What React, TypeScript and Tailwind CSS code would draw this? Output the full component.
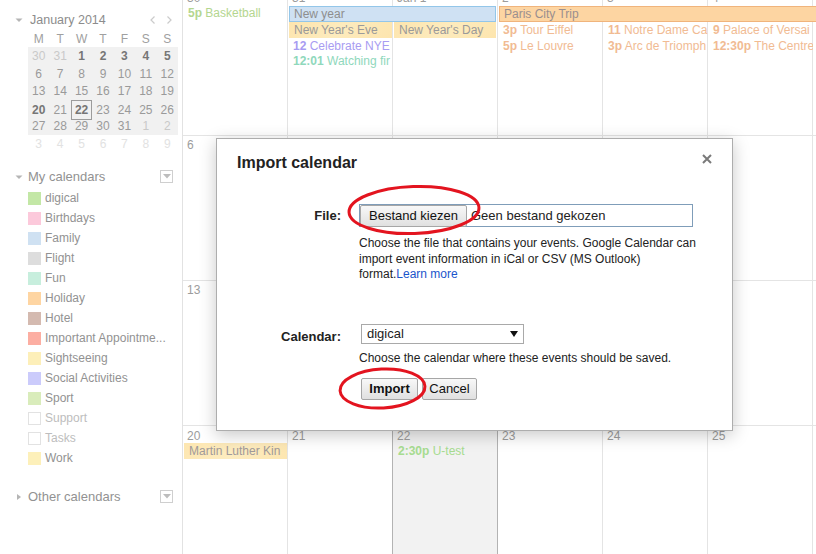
import React from "react";

type Cell = { t: string; k?: string };

const plain = (a: string[]): Cell[] => a.map((t) => ({ t }));

const mini: Cell[][] = [
  [{ t: "30", k: "off" }, { t: "31", k: "off" }, { t: "1", k: "b" }, { t: "2", k: "b" }, { t: "3", k: "b" }, { t: "4", k: "b" }, { t: "5", k: "b" }],
  plain(["6", "7", "8", "9", "10", "11", "12"]),
  plain(["13", "14", "15", "16", "17", "18", "19"]),
  [{ t: "20", k: "b" }, { t: "21" }, { t: "22", k: "today" }, { t: "23" }, { t: "24" }, { t: "25" }, { t: "26" }],
  [{ t: "27" }, { t: "28" }, { t: "29" }, { t: "30" }, { t: "31" }, { t: "1", k: "off" }, { t: "2", k: "off" }],
];
const lastRow = ["3", "4", "5", "6", "7", "8", "9"];

function cellCls(k?: string) {
  if (k === "off") return "text-[#c9c9c9]";
  if (k === "b") return "text-[#767676] font-bold";
  if (k === "today") return "text-[#767676] font-bold border border-[#9c9c9c]";
  return "text-[#9a9a9a]";
}

const cals: [string, string][] = [
  ["digical", "bg-[#c3e7a6]"],
  ["Birthdays", "bg-[#fcc9db]"],
  ["Family", "bg-[#cfe1f2]"],
  ["Flight", "bg-[#dddddd]"],
  ["Fun", "bg-[#c7eedd]"],
  ["Holiday", "bg-[#fed5a2]"],
  ["Hotel", "bg-[#d4bab0]"],
  ["Important Appointme...", "bg-[#fcaea2]"],
  ["Sightseeing", "bg-[#fdefb9]"],
  ["Social Activities", "bg-[#cbcbfb]"],
  ["Sport", "bg-[#d9ecbb]"],
  ["Support", "bg-white border border-[#e2e2e2]"],
  ["Tasks", "bg-white border border-[#e2e2e2]"],
  ["Work", "bg-[#fdf0ba]"],
];

function Caret({ right }: { right?: boolean }) {
  return right ? (
    <svg width="8" height="8" viewBox="0 0 8 8" className="shrink-0">
      <path d="M2 1 L6 4 L2 7 Z" fill="#b5b5b5" />
    </svg>
  ) : (
    <svg width="8" height="8" viewBox="0 0 8 8" className="shrink-0">
      <path d="M0.5 2.5 L7.5 2.5 L4 6 Z" fill="#b5b5b5" />
    </svg>
  );
}

function DropBox() {
  return (
    <div className="w-[13px] h-[13px] border border-[#cfcfcf] flex items-center justify-center">
      <svg width="8" height="5" viewBox="0 0 8 5">
        <path d="M0 0 L8 0 L4 4.5 Z" fill="#bdbdbd" />
      </svg>
    </div>
  );
}

function Sidebar() {
  return (
    <aside className="w-[182px] shrink-0 text-[#929292]">
      <div className="pt-[11px] h-[28px] flex items-center pl-[15px]">
        <Caret />
        <span className="ml-[7px] text-[12.5px] leading-[16px] text-[#8c8c8c]">January 2014</span>
        <div className="ml-auto mr-[10px] flex items-center gap-[12px]">
          <svg width="5" height="8" viewBox="0 0 5 8">
            <path d="M4.5 0.5 L1 4 L4.5 7.5" fill="none" stroke="#cbcbcb" strokeWidth="1.2" />
          </svg>
          <svg width="5" height="8" viewBox="0 0 5 8">
            <path d="M0.5 0.5 L4 4 L0.5 7.5" fill="none" stroke="#cbcbcb" strokeWidth="1.2" />
          </svg>
        </div>
      </div>
      <div className="ml-[28px] w-[150px] mt-[4px]">
        <div className="grid grid-cols-7 h-[15px] text-[12px] leading-[15px] text-center text-[#a0a0a0]">
          {["M", "T", "W", "T", "F", "S", "S"].map((d, i) => (
            <div key={i}>{d}</div>
          ))}
        </div>
        <div className="bg-[#f1f1f1]">
          {mini.map((row, ri) => (
            <div key={ri} className="grid grid-cols-7 h-[17.5px]">
              {row.map((c, ci) => (
                <div key={ci} className={"flex items-center justify-center text-[12px] " + cellCls(c.k)}>
                  {c.t}
                </div>
              ))}
            </div>
          ))}
        </div>
        <div className="grid grid-cols-7 h-[17.5px]">
          {lastRow.map((t, i) => (
            <div key={i} className="flex items-center justify-center text-[12px] text-[#e2e2e2]">
              {t}
            </div>
          ))}
        </div>
      </div>

      <div className="mt-[16px] h-[18px] flex items-center pl-[15px] pr-[9px]">
        <Caret />
        <span className="ml-[5px] text-[13px] leading-[18px]">My calendars</span>
        <div className="ml-auto -mt-[2px]">
          <DropBox />
        </div>
      </div>
      <div className="mt-[2px]">
        {cals.map(([name, sw]) => (
          <div key={name} className="h-[20px] flex items-center pl-[28px]">
            <div className={"w-[13px] h-[13px] shrink-0 " + sw} />
            <span
              className={
                "ml-[4px] text-[12px] leading-[14px] whitespace-nowrap " +
                (name === "Support" || name === "Tasks" ? "text-[#bdbdbd]" : "text-[#929292]")
              }
            >
              {name}
            </span>
          </div>
        ))}
      </div>
      <div className="mt-[20px] h-[18px] flex items-center pl-[15px] pr-[9px]">
        <Caret right />
        <span className="ml-[5px] text-[13px] leading-[18px]">Other calendars</span>
        <div className="ml-auto -mt-[2px]">
          <DropBox />
        </div>
      </div>
    </aside>
  );
}

function BgCells({ today }: { today?: boolean }) {
  return (
    <div className="absolute inset-0 grid grid-cols-[repeat(7,105px)]">
      {[0, 1, 2, 3, 4, 5, 6].map((i) => {
        let cls = "border-r border-[#e4e4e4]";
        if (today && i === 1) cls = "border-r border-[#b3b3b3]";
        if (today && i === 2) cls = "border-r border-[#b3b3b3] bg-[#f2f2f2]";
        return <div key={i} className={cls} />;
      })}
    </div>
  );
}

const num = "text-[12px] leading-[16px] pl-[4px] pt-[1px] text-[#9c9c9c] whitespace-nowrap";
const ev = "min-w-0 text-[12px] leading-[16px] px-[5px] whitespace-nowrap overflow-hidden";

function Week1() {
  return (
    <div className="relative h-[147px] -mt-[11px] border-b border-[#e4e4e4] shrink-0">
      <BgCells />
      <div className="relative grid grid-cols-[repeat(7,105px)] grid-rows-[17px_16px_16px_16px_16px]">
        {["30", "31", "Jan 1", "2", "3", "4", "5"].map((t, i) => (
          <div key={i} className={num + " row-start-1"}>
            {t}
          </div>
        ))}
        <div className={ev + " col-start-1 row-start-2 text-[#b4d68f] -mt-[1px]"}>
          <b>5p</b> Basketball
        </div>
        <div className="col-start-2 col-span-2 row-start-2 ml-[1px] mr-[2px] h-[16px] border border-[#93c6e9] bg-[#cfe1f3] text-[12px] leading-[14px] pl-[4px] text-[#8e8e8e] whitespace-nowrap overflow-hidden">
          New year
        </div>
        <div className="col-start-4 col-span-4 row-start-2 ml-[1px] h-[16px] border border-[#f0b47c] bg-[#fdd5a2] text-[12px] leading-[14px] pl-[4px] text-[#9a8f8f] whitespace-nowrap overflow-hidden">
          Paris City Trip
        </div>
        <div className="col-start-2 row-start-3 mx-[1px] h-[16px] bg-[linear-gradient(135deg,#fde5ae_0%,#fdebbd_50%,#fde5ae_100%)] text-[12px] leading-[16px] pl-[5px] text-[#9a9a9a] whitespace-nowrap overflow-hidden">
          New Year's Eve
        </div>
        <div className="col-start-3 row-start-3 ml-[1px] mr-[2px] h-[16px] bg-[linear-gradient(135deg,#fde5ae_0%,#fdebbd_50%,#fde5ae_100%)] text-[12px] leading-[16px] pl-[5px] text-[#9a9a9a] whitespace-nowrap overflow-hidden">
          New Year's Day
        </div>
        <div className={ev + " col-start-4 row-start-3 text-[#f1bb93]"}>
          <b>3p</b> Tour Eiffel
        </div>
        <div className={ev + " col-start-5 row-start-3 text-[#f1bb93]"}>
          <b>11</b> Notre Dame Ca
        </div>
        <div className={ev + " col-start-6 row-start-3 text-[#f1bb93]"}>
          <b>9</b> Palace of Versai
        </div>
        <div className={ev + " col-start-2 row-start-4 text-[#a89cf2]"}>
          <b>12</b> Celebrate NYE
        </div>
        <div className={ev + " col-start-4 row-start-4 text-[#f1bb93]"}>
          <b>5p</b> Le Louvre
        </div>
        <div className={ev + " col-start-5 row-start-4 text-[#f1bb93]"}>
          <b>3p</b> Arc de Triomph
        </div>
        <div className={ev + " col-start-6 row-start-4 text-[#f1bb93]"}>
          <b>12:30p</b> The Centre
        </div>
        <div className={ev + " col-start-2 row-start-5 text-[#8fd8bc] -mt-[1px]"}>
          <b>12:01</b> Watching fir
        </div>
      </div>
    </div>
  );
}

function PlainWeek({ nums }: { nums: string[] }) {
  return (
    <div className="relative h-[145px] border-b border-[#e4e4e4] shrink-0">
      <BgCells />
      <div className="relative grid grid-cols-[repeat(7,105px)]">
        {nums.map((t, i) => (
          <div key={i} className={num}>
            {t}
          </div>
        ))}
      </div>
    </div>
  );
}

function Week4() {
  return (
    <div className="relative h-[145px] shrink-0">
      <BgCells today />
      <div className="relative grid grid-cols-[repeat(7,105px)] grid-rows-[17px_16px]">
        {["20", "21", "22", "23", "24", "25", "26"].map((t, i) => (
          <div key={i} className={num + " row-start-1 pt-[2px]"}>
            {t}
          </div>
        ))}
        <div className="col-start-1 row-start-2 mx-[1px] h-[16px] bg-[linear-gradient(135deg,#fde6b0_0%,#fdecc0_50%,#fde6b0_100%)] text-[12px] leading-[16px] pl-[5px] text-[#a19a9a] whitespace-nowrap overflow-hidden">
          Martin Luther Kin
        </div>
        <div className={ev + " col-start-3 row-start-2 text-[#a7dc90]"}>
          <b>2:30p</b> U-test
        </div>
      </div>
    </div>
  );
}

function Btn({ children, className }: { children: React.ReactNode; className?: string }) {
  return (
    <div
      className={
        "h-[22px] flex items-center justify-center border border-[#a6a6a6] rounded-[2px] bg-[linear-gradient(#f8f8f8,#e0e0e0)] text-[13px] text-[#111] " +
        (className || "")
      }
    >
      {children}
    </div>
  );
}

function Dialog() {
  return (
    <div className="absolute left-[216px] top-[138px] w-[517px] h-[293px] bg-white border border-[#adadad] shadow-[0_4px_16px_rgba(0,0,0,0.22)] text-[#222]">
      <div className="pl-[20px] pt-[15px] text-[16px] font-bold leading-[18px]">Import calendar</div>
      <div className="absolute top-[15px] right-[20px]">
        <svg width="10" height="10" viewBox="0 0 10 10">
          <path d="M1 1 L9 9 M9 1 L1 9" stroke="#7a7a7a" strokeWidth="2" />
        </svg>
      </div>

      <div className="mt-[32px] flex">
        <div className="w-[124px] text-right text-[13px] font-bold leading-[23px]">File:</div>
        <div className="ml-[18px]">
          <div className="w-[334px] h-[23px] border border-[#7f9db9] flex items-center">
            <Btn className="w-[107px] h-[22px]">Bestand kiezen</Btn>
            <span className="ml-[4px] text-[13px]">Geen bestand gekozen</span>
          </div>
          <div className="mt-[9px] text-[12px] leading-[15.5px] whitespace-nowrap">
            Choose the file that contains your events. Google Calendar can
            <br />
            import event information in iCal or CSV (MS Outlook)
            <br />
            format.<span className="text-[#1a55cc]">Learn more</span>
          </div>
        </div>
      </div>

      <div className="mt-[41px] flex">
        <div className="w-[124px] text-right text-[13px] font-bold leading-[20px] pt-[3px]">Calendar:</div>
        <div className="ml-[18px]">
          <div className="ml-[2px] w-[163px] h-[20px] border border-[#a9a9a9] flex items-center pl-[5px] pr-[5px] text-[13px]">
            <span>digical</span>
            <svg width="8" height="6" viewBox="0 0 8 6" className="ml-auto">
              <path d="M0 0 L8 0 L4 6 Z" fill="#111" />
            </svg>
          </div>
          <div className="mt-[6px] text-[12px] leading-[16px] whitespace-nowrap">
            Choose the calendar where these events should be saved.
          </div>
          <div className="mt-[12px] ml-[2px] flex gap-[4px]">
            <Btn className="w-[57px] font-bold">Import</Btn>
            <Btn className="w-[55px]">Cancel</Btn>
          </div>
        </div>
      </div>
    </div>
  );
}

export default function App() {
  return (
    <div className="relative w-[816px] h-[554px] overflow-hidden bg-white font-['Liberation_Sans',Arial,sans-serif]">
      <div className="flex h-full">
        <Sidebar />
        <main className="flex-1 flex flex-col overflow-hidden border-l border-[#e2e2e2]">
          <Week1 />
          <PlainWeek nums={["6", "7", "8", "9", "10", "11", "12"]} />
          <PlainWeek nums={["13", "14", "15", "16", "17", "18", "19"]} />
          <Week4 />
        </main>
      </div>
      <Dialog />
      <svg className="absolute inset-0 pointer-events-none" width="816" height="554" viewBox="0 0 816 554">
        <ellipse cx="414" cy="210" rx="65" ry="23.5" fill="none" stroke="#e3141f" strokeWidth="3" transform="rotate(-2 414 210)" />
        <ellipse cx="382.5" cy="388.5" rx="42.5" ry="19.5" fill="none" stroke="#e3141f" strokeWidth="3" transform="rotate(-3 382.5 388.5)" />
      </svg>
    </div>
  );
}
